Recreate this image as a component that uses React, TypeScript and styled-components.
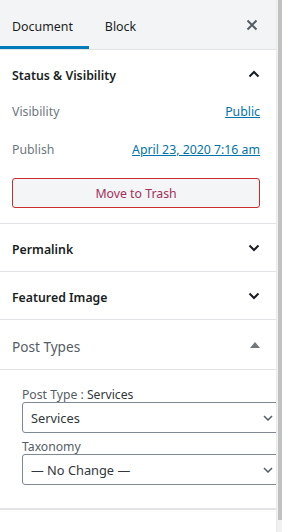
import styled, { createGlobalStyle } from 'styled-components';

const GlobalStyle = createGlobalStyle`
  html, body {
    margin: 0;
    padding: 0;
    background: #fff;
    overflow: hidden;
  }
  body {
    font-family: 'Noto Sans', 'Open Sans', sans-serif;
    color: #191e23;
  }
`;

const Frame = styled.div`
  display: flex;
  width: 282px;
  height: 532px;
`;

const Sidebar = styled.div`
  flex: 1;
  min-width: 0;
  overflow: hidden;
  border-right: 1px solid #e8eaeb;
`;

const ScrollTrack = styled.div`
  width: 5px;
  background: #f1f1f1;
  display: flex;
  flex-direction: column;
  align-items: flex-end;
`;

const ScrollThumb = styled.div`
  width: 4px;
  height: 520px;
  background: #c1c1c1;
`;

const Header = styled.div`
  height: 49px;
  background: #f3f4f5;
  border-bottom: 1px solid #e2e4e7;
  display: flex;
  align-items: stretch;
`;

const Tab = styled.button<{ active?: boolean }>`
  border: none;
  background: transparent;
  font: inherit;
  font-size: 12.4px;
  color: #191e23;
  padding: 4px ${(p) => (p.active ? '16px' : '12px')} 0 ${(p) => (p.active ? '12px' : '16px')};
  box-shadow: ${(p) => (p.active ? 'inset 0 -3px #007cba' : 'none')};
  cursor: pointer;
`;

const CloseButton = styled.button`
  margin-left: auto;
  width: 46px;
  border: none;
  background: transparent;
  display: flex;
  align-items: center;
  justify-content: center;
  padding: 0 2px 0 0;
`;

const Panel = styled.div`
  border-bottom: 1px solid #e2e4e7;
`;

const PanelTitle = styled.div<{ muted?: boolean; tall?: boolean }>`
  box-sizing: border-box;
  height: ${(p) => (p.tall ? '49px' : '47px')};
  display: flex;
  align-items: center;
  justify-content: space-between;
  padding: 4px 16px 0 12px;
  font-size: ${(p) => (p.muted ? '13.6px' : '12.3px')};
  font-weight: ${(p) => (p.muted ? 400 : 600)};
  color: ${(p) => (p.muted ? '#555d66' : '#191e23')};

  svg {
    margin-top: -4px;
  }
`;

const StatusBody = styled.div`
  padding: 1px 16px 15px 12px;
  display: flex;
  flex-direction: column;
`;

const Row = styled.div`
  height: 26px;
  display: flex;
  align-items: center;
  justify-content: space-between;
  font-size: 12.3px;
  margin-bottom: 12px;
`;

const RowLabel = styled.span`
  color: #6c7781;
`;

const RowLink = styled.a`
  color: #0073aa;
  text-decoration: underline;
`;

const TrashButton = styled.button`
  margin-top: 4px;
  height: 30px;
  border: 1px solid #c92c2c;
  border-radius: 3px;
  background: #f3f5f6;
  color: #a4305a;
  font: inherit;
  font-size: 12.3px;
`;

const TypesBody = styled.div`
  padding: 17px 0 23px 22px;
  display: flex;
  flex-direction: column;
  border-bottom: 2px solid #e2e4e7;
`;

const FieldLabel = styled.label<{ spaced?: boolean }>`
  font-size: 12.2px;
  color: #555d66;
  line-height: 15px;
  margin-top: ${(p) => (p.spaced ? '6px' : '0')};
`;

const Strong = styled.span`
  color: #32373c;
`;

const SelectBox = styled.div`
  width: 258px;
  height: 31px;
  border: 1px solid #7e8993;
  border-radius: 3px;
  display: flex;
  align-items: center;
  justify-content: space-between;
  padding: 0 6px 0 8px;
  box-sizing: border-box;
  font-size: 12.8px;
  color: #32373c;
`;

const Chevron = ({ up }: { up?: boolean }) => (
  <svg width="12" height="8" viewBox="0 0 12 8">
    <path
      d={up ? 'M1.5 6.5 L6 2 L10.5 6.5' : 'M1.5 1.5 L6 6 L10.5 1.5'}
      fill="none"
      stroke="#191e23"
      strokeWidth="2"
    />
  </svg>
);

const SmallChevron = () => (
  <svg width="10" height="6" viewBox="0 0 10 6">
    <path d="M1 1 L5 5 L9 1" fill="none" stroke="#555d66" strokeWidth="1.5" />
  </svg>
);

const Caret = () => (
  <svg width="10" height="6" viewBox="0 0 10 6">
    <path d="M5 0 L10 6 L0 6 Z" fill="#72777c" />
  </svg>
);

const CloseIcon = () => (
  <svg width="12" height="12" viewBox="0 0 12 12">
    <path d="M1.5 1.5 L10.5 10.5 M10.5 1.5 L1.5 10.5" stroke="#555d66" strokeWidth="2" />
  </svg>
);

export default function App() {
  return (
    <>
      <GlobalStyle />
      <Frame>
        <Sidebar>
          <Header>
            <Tab active>Document</Tab>
            <Tab>Block</Tab>
            <CloseButton>
              <CloseIcon />
            </CloseButton>
          </Header>

          <Panel>
            <PanelTitle>
              Status &amp; Visibility
              <Chevron up />
            </PanelTitle>
            <StatusBody>
              <Row>
                <RowLabel>Visibility</RowLabel>
                <RowLink>Public</RowLink>
              </Row>
              <Row>
                <RowLabel>Publish</RowLabel>
                <RowLink>April 23, 2020 7:16 am</RowLink>
              </Row>
              <TrashButton>Move to Trash</TrashButton>
            </StatusBody>
          </Panel>

          <Panel>
            <PanelTitle>
              Permalink
              <Chevron />
            </PanelTitle>
          </Panel>

          <Panel>
            <PanelTitle>
              Featured Image
              <Chevron />
            </PanelTitle>
          </Panel>

          <Panel>
            <PanelTitle muted tall>
              Post Types
              <Caret />
            </PanelTitle>
          </Panel>

          <TypesBody>
            <FieldLabel>
              Post Type : <Strong>Services</Strong>
            </FieldLabel>
            <SelectBox>
              Services
              <SmallChevron />
            </SelectBox>
            <FieldLabel spaced>Taxonomy</FieldLabel>
            <SelectBox>
              — No Change —
              <SmallChevron />
            </SelectBox>
          </TypesBody>
        </Sidebar>
        <ScrollTrack>
          <ScrollThumb />
        </ScrollTrack>
      </Frame>
    </>
  );
}
